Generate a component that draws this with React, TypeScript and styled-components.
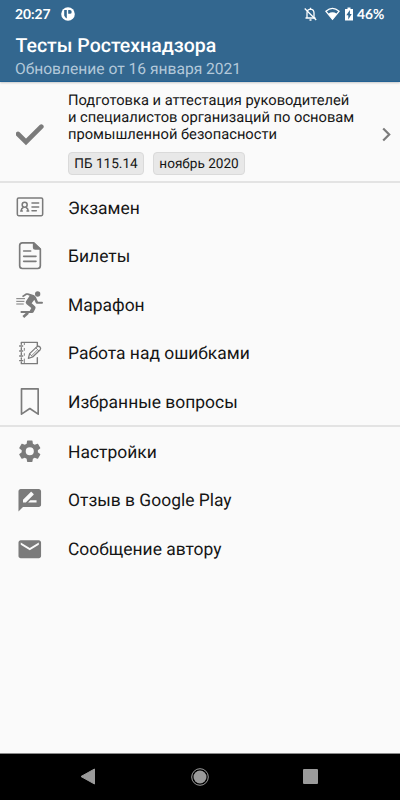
import React from 'react';
import styled, { createGlobalStyle } from 'styled-components';

const Global = createGlobalStyle`
  * { box-sizing: border-box; }
  body {
    margin: 0;
    background: #fafafa;
    font-family: Roboto, "Liberation Sans", sans-serif;
    text-rendering: geometricPrecision;
  }
`;

const Screen = styled.div`
  width: 400px;
  height: 800px;
  display: flex;
  flex-direction: column;
  background: #fafafa;
  overflow: hidden;
`;

const Header = styled.header`
  height: 82px;
  flex: none;
  background: #33678f;
  border-bottom: 1px solid #236193;
  box-shadow: 0 1px 2px rgba(0, 0, 0, 0.2);
  color: #fff;
`;

const StatusBar = styled.div`
  height: 28px;
  display: flex;
  align-items: center;
  padding: 0 16px 0 15px;
  font: 700 13.8px/28px Lato, sans-serif;
`;

const Clock = styled.span`
  width: 46px;
`;

const StatusIcons = styled.div`
  display: flex;
  align-items: center;
  margin-left: auto;
`;

const StatusSvg = styled.svg<{ $gap?: number }>`
  display: block;
  flex: none;
  margin-right: ${(p) => p.$gap ?? 0}px;
`;

const Percent = styled.span`
  width: 27px;
  white-space: nowrap;
`;

const Title = styled.h1`
  margin: 6px 0 0 15.5px;
  font-size: 19.5px;
  line-height: 24px;
  font-weight: 500;
  white-space: nowrap;
`;

const Subtitle = styled.div`
  margin-left: 15px;
  font-size: 15.6px;
  line-height: 22px;
  color: #b3c9da;
  white-space: nowrap;
`;

const Course = styled.section`
  height: 101px;
  flex: none;
  display: flex;
  padding: 10px 9px 0 16px;
  border-bottom: 2px solid #e3e3e3;
`;

const CourseIcon = styled.svg`
  display: block;
  flex: none;
  margin: 28px 24px 0 0;
`;

const CourseBody = styled.div`
  flex: 1;
`;

const CourseText = styled.p`
  margin: 0;
  font-size: 14.7px;
  line-height: 17.2px;
  color: #151515;
  white-space: nowrap;
`;

const Chips = styled.div`
  display: flex;
  gap: 9px;
  margin-top: 8px;
`;

const Chip = styled.span<{ $width: number }>`
  width: ${(p) => p.$width}px;
  height: 23px;
  border: 1px solid #dadada;
  border-radius: 4px;
  background: #e8e8e8;
  color: #151515;
  font-size: 13.6px;
  line-height: 22px;
  text-align: center;
  white-space: nowrap;
`;

const Chevron = styled.svg`
  display: block;
  flex: none;
  margin-top: 35px;
`;

const Menu = styled.nav<{ $divider?: boolean }>`
  display: flex;
  flex-direction: column;
  flex: none;
  height: ${(p) => (p.$divider ? 244 : 146)}px;
  border-bottom: ${(p) => (p.$divider ? '2px solid #e3e3e3' : 'none')};
`;

const Row = styled.div`
  height: 48.65px;
  flex: none;
  display: flex;
  align-items: center;
  gap: 24px;
  padding-left: 16px;
`;

const RowIcon = styled.svg`
  display: block;
  flex: none;
  width: 28px;
  height: 28px;
`;

const Label = styled.span`
  padding-top: 2.4px;
  font-size: 17.45px;
  line-height: 24px;
  color: #151515;
  white-space: nowrap;
`;

const NavBar = styled.footer`
  height: 47px;
  flex: none;
  margin-top: auto;
  border-top: 1px solid #8a8a8a;
  background: #000;
  display: flex;
  align-items: center;
  justify-content: space-between;
  padding: 0 82px 1px 80px;
`;

const grey = '#7b7b7b';
const line = { fill: 'none', stroke: grey, strokeLinecap: 'round', strokeLinejoin: 'round' } as const;

const CardIcon = () => (
  <RowIcon viewBox="48 24 84 84">
    <g {...line} strokeWidth={4.6}>
      <rect x={52} y={39} width={76} height={53} rx={4} />
      <circle cx={74} cy={59} r={7.5} />
      <path d="M64 78v-3q0-5 5-7M84 78v-3q0-5-5-7M62 78h5M81 78h5" />
      <path d="M96 54h20M96 66h20M96 77h13" />
    </g>
  </RowIcon>
);

const DocIcon = () => (
  <RowIcon viewBox="48 171 84 84">
    <g {...line} strokeWidth={5}>
      <path d="M101 173.500H67q-8 0-8 8v61q0 8 8 8h46q8 0 8-8v-50z" />
      <path d="M101 174v13q0 5 5 5h14z" fill={grey} />
      <path d="M71 198h21M71 214h37M71 229h37" />
    </g>
  </RowIcon>
);

const RunIcon = () => (
  <RowIcon viewBox="48 46 84 84">
    <circle cx={113} cy={55} r={8} fill={grey} />
    <path
      d="M66 61l12-8q3-1 6 0l17 5q5 2 7 7l6 13h12q3 0 3 3t-3 3h-15q-3 0-4-3l-4-9-8 11 10 9q3 3 1 7l-5 10q-1 3-5 3H62v-6h27l5-9-14-11q-5-4-2-9l11-17-8-3-12 8z"
      fill={grey}
    />
    <path d="M84 111l-14 13" {...line} strokeLinecap="butt" strokeWidth={8} />
    <path d="M50 69h24M50 77h22M50 85h20" {...line} strokeWidth={3} />
  </RowIcon>
);

const NotebookIcon = () => (
  <RowIcon viewBox="48 190 84 84">
    <g {...line} strokeWidth={4.2}>
      <path d="M64 206v-6h48v10M112 246v18H64v-5M64 216v6M64 231v6M64 247v4" />
      <path d="M59 211h9M59 226h9M59 241h9M59 255h9" />
      <path d="M73 202v5M73 218v6M73 234v5M73 250v12" strokeWidth={2.8} />
      <path d="M85 248l4-14 22-21q5-3 9 1 4 4 0 9l-22 21z" strokeWidth={3.8} />
      <path d="M95 240l16-16M108 217l8 8M90 235l7 8" strokeWidth={2.6} />
    </g>
  </RowIcon>
);

const BookmarkIcon = () => (
  <RowIcon viewBox="48 39 84 84">
    <path d="M64.500 41.500h50v76l-25-17-25 17z" {...line} strokeWidth={5} />
  </RowIcon>
);

const MaterialIcon = ({ d }: { d: string }) => (
  <RowIcon viewBox="-0.200 -0.600 24.800 24.800">
    <path d={d} fill={grey} />
  </RowIcon>
);

const gear =
  'M19.140 12.940c.04-.3.060-.61.060-.94 0-.32-.02-.64-.07-.94l2.030-1.580a.49.490 0 0 0 .12-.61l-1.920-3.320a.488.488 0 0 0-.59-.22l-2.390.96c-.5-.38-1.030-.7-1.620-.94l-.36-2.540a.484.484 0 0 0-.48-.41h-3.840c-.24 0-.43.170-.47.410l-.36 2.540c-.59.240-1.130.570-1.620.940l-2.390-.96c-.22-.08-.47 0-.59.220L2.740 8.870c-.12.210-.08.470.120.610l2.030 1.580c-.05.300-.09.630-.09.940s.02.640.070.940l-2.030 1.580a.49.490 0 0 0-.12.610l1.920 3.320c.12.220.370.290.590.220l2.390-.96c.5.380 1.030.700 1.620.940l.36 2.540c.05.240.240.410.480.410h3.840c.24 0 .44-.17.470-.41l.36-2.540c.59-.24 1.130-.56 1.620-.94l2.390.96c.22.080.470 0 .59-.22l1.920-3.320c.12-.22.070-.47-.12-.61l-2.010-1.580zM12 15.600A3.600 3.600 0 1 1 12 8.400a3.600 3.600 0 0 1 0 7.200z';
const review =
  'M20 2H4c-1.100 0-2 .9-2 2v18l4-4h14c1.100 0 2-.9 2-2V4c0-1.100-.9-2-2-2zM6 14v-2.470l6.880-6.880c.2-.2.510-.2.710 0l1.770 1.770c.2.200.2.510 0 .71L8.470 14H6zm12 0h-7.500l2-2H18v2z';
const mail =
  'M20 4H4c-1.100 0-2 .9-2 2v12c0 1.100.9 2 2 2h16c1.100 0 2-.9 2-2V6c0-1.100-.9-2-2-2zm0 4l-8 5-8-5V6l8 5 8-5v2z';

const study = [
  { label: 'Экзамен', icon: <CardIcon /> },
  { label: 'Билеты', icon: <DocIcon /> },
  { label: 'Марафон', icon: <RunIcon /> },
  { label: 'Работа над ошибками', icon: <NotebookIcon /> },
  { label: 'Избранные вопросы', icon: <BookmarkIcon /> },
];

const service = [
  { label: 'Настройки', icon: <MaterialIcon d={gear} /> },
  { label: 'Отзыв в Google Play', icon: <MaterialIcon d={review} /> },
  { label: 'Сообщение автору', icon: <MaterialIcon d={mail} /> },
];

export default function App() {
  return (
    <Screen>
      <Global />
      <Header>
        <StatusBar>
          <Clock>20:27</Clock>
          <StatusSvg width={14} height={14} viewBox="0 0 14 14">
            <circle cx={7} cy={7} r={6.8} fill="#fff" />
            <path d="M3.200 3h2.600v8.500a5 5 0 0 1-2.600-3zM7.200 3h1.600a1.900 1.900 0 0 1 0 3.800H7.200z" fill="#33678f" />
          </StatusSvg>
          <StatusIcons>
            <StatusSvg $gap={8} width={13} height={14} viewBox="0 0 13 14" fill="none" stroke="#fff" strokeWidth={1.3}>
              <path d="M3 11V6q0-3.500 3.500-3.800Q10 2.500 10 6v5M1.500 11h10M6.500 .8v1.500M5.500 13h2" />
              <path d="M.7 1.500l11.500 11.500" />
            </StatusSvg>
            <StatusSvg $gap={5} width={15} height={14} viewBox="0 0 15 14">
              <path d="M.9 4.200Q7.500-1.600 14.100 4.200L7.500 12.300z" fill="none" stroke="#fff" strokeWidth={1.2} />
              <path d="M3.200 6.700Q7.500 4 11.800 6.700L7.500 12.500z" fill="#fff" />
            </StatusSvg>
            <StatusSvg $gap={4} width={8} height={14} viewBox="0 0 8 14">
              <path d="M2.500.5h3V2H8v11.500H0V2h2.500z" fill="#fff" />
              <path d="M4.900 3L1.300 8.300h2v4.200l3.400-5.500h-1.800z" fill="#33678f" />
            </StatusSvg>
            <Percent>46%</Percent>
          </StatusIcons>
        </StatusBar>
        <Title>Тесты Ростехнадзора</Title>
        <Subtitle>Обновление от 16 января 2021</Subtitle>
      </Header>
      <Course>
        <CourseIcon width={28} height={28} viewBox="48 120 84 84">
          <path d="M54 162l24 24 46-46" fill="none" stroke={grey} strokeWidth={14} strokeLinecap="round" />
        </CourseIcon>
        <CourseBody>
          <CourseText>
            Подготовка и аттестация руководителей
            <br />
            и специалистов организаций по основам
            <br />
            промышленной безопасности
          </CourseText>
          <Chips>
            <Chip $width={76}>ПБ 115.14</Chip>
            <Chip $width={92}>ноябрь 2020</Chip>
          </Chips>
        </CourseBody>
        <Chevron width={9} height={15} viewBox="0 0 9 15">
          <path d="M1.200 1.500l6 6-6 6" fill="none" stroke={grey} strokeWidth={2.200} />
        </Chevron>
      </Course>
      <Menu $divider>
        {study.map((item) => (
          <Row key={item.label}>
            {item.icon}
            <Label>{item.label}</Label>
          </Row>
        ))}
      </Menu>
      <Menu>
        {service.map((item) => (
          <Row key={item.label}>
            {item.icon}
            <Label>{item.label}</Label>
          </Row>
        ))}
      </Menu>
      <NavBar>
        <svg width={17} height={17} viewBox="0 0 17 17">
          <path d="M1 8.500L14.500 1v15z" fill="#9b9b9b" stroke="#9b9b9b" strokeLinejoin="round" />
        </svg>
        <svg width={18} height={18} viewBox="0 0 18 18">
          <circle cx={9} cy={9} r={6.500} fill="#9b9b9b" />
          <circle cx={9} cy={9} r={8.300} fill="none" stroke="#9b9b9b" />
        </svg>
        <svg width={15} height={15} viewBox="0 0 15 15">
          <rect width={15} height={15} rx={1} fill="#9b9b9b" />
        </svg>
      </NavBar>
    </Screen>
  );
}
